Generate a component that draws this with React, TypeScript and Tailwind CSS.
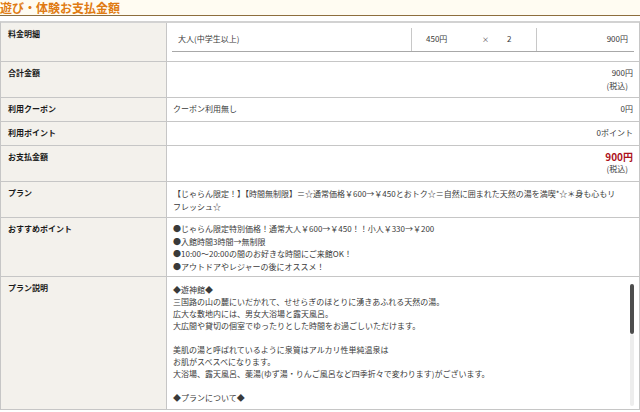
import type { ReactNode } from 'react';

const font = { fontFamily: '"Noto Sans CJK JP", "Noto Sans", sans-serif' };

function Row({ label, h, children }: { label: string; h: string; children: ReactNode }) {
  return (
    <div className={`flex border-b border-[#c6c6c6] ${h}`}>
      <div className="w-[166px] shrink-0 border-r border-[#c6c6c6] bg-[#f3f1ec] pl-[7px] pt-[4px] text-[8px] font-bold leading-[13px] text-[#1a1a1a]">
        {label}
      </div>
      <div className="flex-1 text-[8px] leading-[12.5px] text-[#3a3a3a]">{children}</div>
    </div>
  );
}

function Tax() {
  return <div className="pr-[11px] text-right text-[8px] leading-[12px]">(税込)</div>;
}

export default function App() {
  const recommend = [
    '●じゃらん限定特別価格！通常大人￥600→￥450！！小人￥330→￥200',
    '●入館時間3時間→無制限',
    '●10:00～20:00の間のお好きな時間にご来館OK！',
    '●アウトドアやレジャーの後にオススメ！',
  ];

  const description = [
    '◆遊神館◆',
    '三国路の山の麓にいだかれて、せせらぎのほとりに湧きあふれる天然の湯。',
    '広大な敷地内には、男女大浴場と露天風呂。',
    '大広間や貸切の個室でゆったりとした時間をお過ごしいただけます。',
    '',
    '美肌の湯と呼ばれているように泉質はアルカリ性単純温泉は',
    'お肌がスベスベになります。',
    '大浴場、露天風呂、薬湯(ゆず湯・りんご風呂など四季折々で変わります)がございます。',
    '',
    '◆プランについて◆',
  ];

  return (
    <div className="h-[412px] w-[640px] overflow-hidden bg-white" style={font}>
      {/* Title */}
      <div className="h-[16px] border-b border-[#8d6e3e] bg-[#fffcf2]">
        <h1 className="text-[12px] font-bold leading-[15px] text-[#e07b12]">
          遊び・体験お支払金額
        </h1>
      </div>

      {/* Table */}
      <div className="mt-[5px] border-l border-r border-t-[2px] border-[#d2d2d2] border-l-[#c6c6c6] border-r-[#c6c6c6]">
        <Row label="料金明細" h="h-[39px]">
          <div className="ml-[5px] mr-[5px] mt-[5px] flex h-[24px] items-center border-b border-[#a8a8a8]">
            <div className="w-[239px] pl-[6px]">大人(中学生以上)</div>
            <div className="flex h-full w-[125px] items-center border-l border-[#c8c8c8]">
              <span className="w-[70px] pl-[14px]">450円</span>
              <span className="w-[25px] text-[7px]">×</span>
              <span>2</span>
            </div>
            <div className="flex h-full flex-1 items-center justify-end border-l border-[#c8c8c8] pr-[6px]">
              900円
            </div>
          </div>
        </Row>

        <Row label="合計金額" h="h-[36px]">
          <div className="pt-[5px] pr-[6px] text-right">900円</div>
          <Tax />
        </Row>

        <Row label="利用クーポン" h="h-[24px]">
          <div className="flex justify-between pl-[6px] pr-[6px] pt-[5px]">
            <span>クーポン利用無し</span>
            <span>0円</span>
          </div>
        </Row>

        <Row label="利用ポイント" h="h-[24px]">
          <div className="pr-[6px] pt-[5px] text-right">0ポイント</div>
        </Row>

        <Row label="お支払金額" h="h-[36px]">
          <div className="pr-[6px] pt-[4px] text-right text-[10px] font-bold leading-[13px] text-[#ad121b]">
            900円
          </div>
          <Tax />
        </Row>

        <Row label="プラン" h="h-[36px]">
          <div className="pl-[6px] pr-[8px] pt-[5px] leading-[13px]">
            【じゃらん限定！】【時間無制限】＝☆通常価格￥600→￥450とおトク☆＝自然に囲まれた天然の湯を満喫*☆＊身も心もリ
            <br />
            フレッシュ☆
          </div>
        </Row>

        <Row label="おすすめポイント" h="h-[59px]">
          <div className="pl-[6px] pt-[5px] leading-[12.5px]">
            {recommend.map((line) => (
              <div key={line}>{line}</div>
            ))}
          </div>
        </Row>

        <Row label="プラン説明" h="h-[133px]">
          <div className="flex h-full">
            <div className="flex-1 pl-[6px] pt-[7px] leading-[12px]">
              {description.map((line, i) => (
                <div key={i} className="h-[12px] whitespace-nowrap">
                  {line}
                </div>
              ))}
            </div>
            {/* scrollbar */}
            <div className="mr-[5px] mt-[7px] mb-[3px] flex w-[4px] flex-col">
              <div className="h-[50px] rounded-[2px] bg-[#4d4d4d]" />
              <div className="flex-1 rounded-[2px] bg-[#ededed]" />
            </div>
          </div>
        </Row>
      </div>
    </div>
  );
}
